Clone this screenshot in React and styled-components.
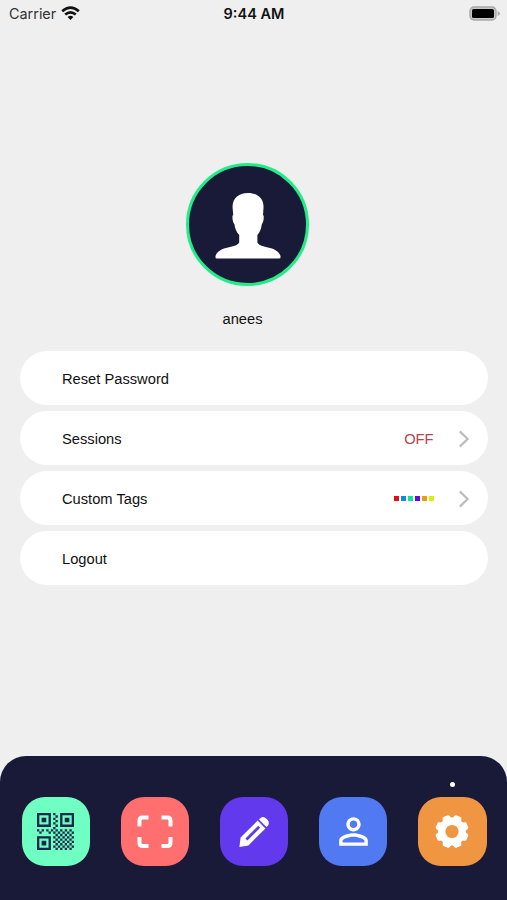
import React from 'react';
import styled, { createGlobalStyle } from 'styled-components';

const tagColors = ['#e01010', '#0c8ce4', '#10e49c', '#6408e4', '#e4a010', '#dcec10'];

const finderCells = (x, y) =>
  `M${x} ${y}h6v6h-6zM${x + 1} ${y + 1}v4h4v-4zM${x + 2} ${y + 2}h2v2h-2z`;

const buildQrPath = () => {
  let path = finderCells(0, 0) + finderCells(10, 0) + finderCells(0, 10);
  for (let row = 0; row < 16; row += 1) {
    for (let col = 0; col < 16; col += 1) {
      const column = (col === 7 || col === 8) && row < 7;
      const band = (row === 7 || row === 8) && col < 7 && col !== 3;
      const block = row > 6 && col > 6;
      if ((column || band || block) && (row + col) % 2 === 1) {
        path += `M${col} ${row}h1v1h-1z`;
      }
    }
  }
  return path;
};

const QrIcon = () => (
  <svg width="37" height="37" viewBox="0 0 16 16" fill="#14294a" fillRule="evenodd">
    <path d={buildQrPath()} />
  </svg>
);

const ScanIcon = () => (
  <svg width="36" height="34" viewBox="0 0 36 34" fill="none" stroke="#fff" strokeWidth="4">
    <path d="M2.5 11.5V5.5Q2.5 2.5 5.5 2.5H11.5M24.5 2.5H30.5Q33.5 2.5 33.5 5.5V11.5M33.5 22V28Q33.5 31 30.5 31H24.5M11.5 31H5.5Q2.5 31 2.5 28V22" />
  </svg>
);

const PencilIcon = () => (
  <svg width="32" height="32" viewBox="0 0 32 32" fill="#fff" fillRule="evenodd">
    <path d="M1.4 30.9L2.6 21.6L19.6 4.6L27.4 12.4L10.4 29.4ZM7.4 22.6L9.4 24.6L22.2 11.8L20.2 9.8Z" />
    <path d="M20.9 3.4L22.6 1.9Q24.4 .6 26.6 1.4Q29.6 2.7 30.6 5.4Q31.3 7.6 30 9.4L28.5 11Z" />
  </svg>
);

const PersonIcon = () => (
  <svg width="43" height="43" viewBox="0 0 24 24" fill="#fff">
    <path d="M12 5.9c1.16 0 2.1.94 2.1 2.1s-.94 2.1-2.1 2.1S9.9 9.16 9.9 8s.94-2.1 2.1-2.1m0 9c2.97 0 6.1 1.46 6.1 2.1v1.1H5.9V17c0-.64 3.13-2.1 6.1-2.1M12 4C9.79 4 8 5.79 8 8s1.79 4 4 4 4-1.79 4-4-1.79-4-4-4zm0 9c-2.67 0-8 1.34-8 4v3h16v-3c0-2.66-5.33-4-8-4z" />
  </svg>
);

const GearIcon = () => (
  <svg width="34" height="34" viewBox="-17 -16.5 34 34">
    <g fill="#fff">
      <circle r="13.9" />
      {[22.5, 67.5, 112.5, 157.5, 202.5, 247.5, 292.5, 337.5].map((angle) => (
        <path
          key={angle}
          d="M-4.8 -12L-3.7 -15.5Q-3.4 -16.6 -2.4 -16.6H2.4Q3.4 -16.6 3.7 -15.5L4.8 -12Z"
          transform={`rotate(${angle})`}
        />
      ))}
    </g>
    <circle r="6.6" fill="#f09642" />
  </svg>
);

const AvatarFigure = () => (
  <svg width="66" height="66" viewBox="0 0 66 66" fill="#fff">
    <path d="M33 0C43 0 49 6 48.5 14.5L48 22C49.4 22.3 48.8 29 46.8 31.2C46.2 36 44.6 39.8 42.4 42V49.5C44.5 53.2 49.6 53.6 55 54.9C61 56.4 65.4 59.8 65.6 64Q65.6 65.5 64 65.5H2Q.4 65.5 .4 64C.6 59.8 5 56.4 11 54.9C16.4 53.6 22 53.2 24.2 49.5V42C21.8 39.6 20.1 36 19.4 31.2C17.4 29 16.8 22.3 18.2 22L17.6 14.5C17.1 6 23 0 33 0Z" />
  </svg>
);

const WifiIcon = () => (
  <svg width="19" height="15" viewBox="0 0 19 15" fill="none" stroke="#111" strokeWidth="2.7">
    <path d="M1.2 5.2Q9.5 -2.1 17.8 5.2" />
    <path d="M4.2 8.5Q9.5 4.1 14.8 8.5" />
    <path d="M6.6 10.9Q9.5 8.5 12.4 10.9L9.5 13.9Z" fill="#111" stroke="none" />
  </svg>
);

const BatteryIcon = () => (
  <svg width="32" height="16" viewBox="0 0 32 16">
    <rect x="1" y="1" width="26" height="13" rx="4" fill="#c8c8c8" stroke="#a8a8a8" strokeWidth="1.4" />
    <rect x="3" y="3" width="22" height="9" rx="1.6" fill="#000" />
    <path d="M28.6 5Q31 6 31 7.5Q31 9 28.6 10Z" fill="#aaa" />
  </svg>
);

const ChevronIcon = () => (
  <svg width="12" height="18" viewBox="0 0 12 18" fill="none" stroke="#bdbdbd" strokeWidth="2.2">
    <path d="M1.8 1.4L9.6 9L1.8 16.6" />
  </svg>
);

const navItems = [
  { name: 'codes', color: '#6fffc3', icon: <QrIcon /> },
  { name: 'scan', color: '#ff6f6f', icon: <ScanIcon /> },
  { name: 'edit', color: '#6239ec', icon: <PencilIcon /> },
  { name: 'profile', color: '#5179f2', icon: <PersonIcon /> },
  { name: 'settings', color: '#f09642', icon: <GearIcon />, active: true }
];

const App = () => {
  return (
    <Screen>
      <GlobalStyle />
      <StatusBar>
        <Carrier>
          <span>Carrier</span>
          <WifiIcon />
        </Carrier>
        <Clock>9:44 AM</Clock>
        <Battery>
          <BatteryIcon />
        </Battery>
      </StatusBar>

      <Profile>
        <Avatar>
          <AvatarFigure />
        </Avatar>
        <UserName>anees</UserName>
      </Profile>

      <SettingsList>
        <SettingRow>
          <SettingLabel>Reset Password</SettingLabel>
        </SettingRow>
        <SettingRow>
          <SettingLabel>Sessions</SettingLabel>
          <SessionStatus>OFF</SessionStatus>
          <ChevronIcon />
        </SettingRow>
        <SettingRow>
          <SettingLabel>Custom Tags</SettingLabel>
          <TagList>
            {tagColors.map((color) => (
              <Tag key={color} $color={color} />
            ))}
          </TagList>
          <ChevronIcon />
        </SettingRow>
        <SettingRow>
          <SettingLabel>Logout</SettingLabel>
        </SettingRow>
      </SettingsList>

      <NavBar>
        {navItems.map((item) => (
          <NavItem key={item.name}>
            <ActiveDot $active={item.active} />
            <NavButton $color={item.color}>{item.icon}</NavButton>
          </NavItem>
        ))}
      </NavBar>
    </Screen>
  );
};

const GlobalStyle = createGlobalStyle`
  body {
    margin: 0;
    background: #efefef;
  }

  svg {
    display: block;
    flex-shrink: 0;
  }
`;

const Screen = styled.div`
  display: flex;
  flex-direction: column;
  box-sizing: border-box;
  width: 507px;
  height: 900px;
  overflow: hidden;
  background: #efefef;
  color: #111;
  font-family: 'Liberation Sans', Arial, sans-serif;
  font-size: 14.7px;
`;

const StatusBar = styled.div`
  display: grid;
  grid-template-columns: 1fr auto 1fr;
  align-items: center;
  height: 27px;
  padding: 0 6px 0 9px;
  font-family: Inter, sans-serif;
  font-size: 14.5px;
`;

const Carrier = styled.div`
  display: flex;
  align-items: center;
  gap: 5px;
  color: #333;
  font-size: 14.4px;
`;

const Clock = styled.div`
  margin-right: 2px;
  font-weight: 600;
`;

const Battery = styled.div`
  display: flex;
  justify-content: flex-end;
`;

const Profile = styled.div`
  display: flex;
  flex-direction: column;
  align-items: center;
  padding: 136px 12px 0 0;
`;

const Avatar = styled.div`
  display: flex;
  align-items: center;
  justify-content: center;
  box-sizing: border-box;
  width: 123px;
  height: 123px;
  padding-top: 2px;
  border: 3.5px solid #20ec88;
  border-radius: 50%;
  background: #181a38;
`;

const UserName = styled.div`
  margin: 24px 10px 0 0;
  line-height: 18px;
`;

const SettingsList = styled.div`
  display: flex;
  flex-direction: column;
  gap: 6px;
  margin: 23px 19px 0 19.5px;
`;

const SettingRow = styled.div`
  display: flex;
  align-items: center;
  box-sizing: border-box;
  height: 54px;
  padding: 1px 18.5px 0 42.5px;
  border-radius: 27px;
  background: #fff;
`;

const SettingLabel = styled.span`
  flex: 1;
  padding-top: 1px;
`;

const SessionStatus = styled.span`
  margin-right: 24px;
  padding-top: 1px;
  color: #b5444f;
`;

const TagList = styled.div`
  display: flex;
  gap: 2px;
  margin-right: 24px;
`;

const Tag = styled.span`
  width: 5px;
  height: 5px;
  background: ${(props) => props.$color};
`;

const NavBar = styled.div`
  display: flex;
  justify-content: space-between;
  box-sizing: border-box;
  height: 144px;
  margin-top: auto;
  padding: 26px 20.5px 0 21.5px;
  border-radius: 26px 26px 0 0;
  background: #181a38;
`;

const NavItem = styled.div`
  display: flex;
  flex-direction: column;
  align-items: center;
  gap: 10.3px;
`;

const ActiveDot = styled.span`
  width: 5px;
  height: 5px;
  border-radius: 50%;
  background: ${(props) => (props.$active ? '#fff' : 'transparent')};
`;

const NavButton = styled.button`
  display: flex;
  align-items: center;
  justify-content: center;
  width: 68.5px;
  height: 68.5px;
  padding: 0;
  border: 0;
  border-radius: 23px;
  background: ${(props) => props.$color};
`;

export default App;
